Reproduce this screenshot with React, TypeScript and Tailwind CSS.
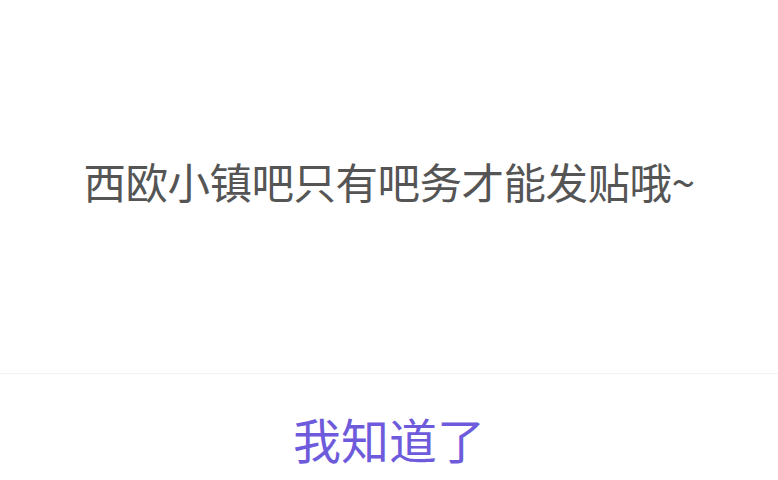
export default function App() {
  return (
    <div
      className="w-[778px] h-[480px] overflow-hidden bg-white flex flex-col"
      style={{ fontFamily: '"Noto Sans CJK SC", "Noto Sans", sans-serif' }}
    >
      <div className="h-[373px] flex items-center justify-center shrink-0 pb-[10px]">
        <p className="text-[42.5px] leading-none text-[#555555] tracking-[-0.5px]">
          西欧小镇吧只有吧务才能发贴哦~
        </p>
      </div>
      <div className="h-px bg-[#f2f2f2] shrink-0" />
      <div className="h-[140px] flex items-center justify-center shrink-0 pb-[12px]">
        <button className="text-[48px] leading-none text-[#6e5bdc]">我知道了</button>
      </div>
    </div>
  )
}
